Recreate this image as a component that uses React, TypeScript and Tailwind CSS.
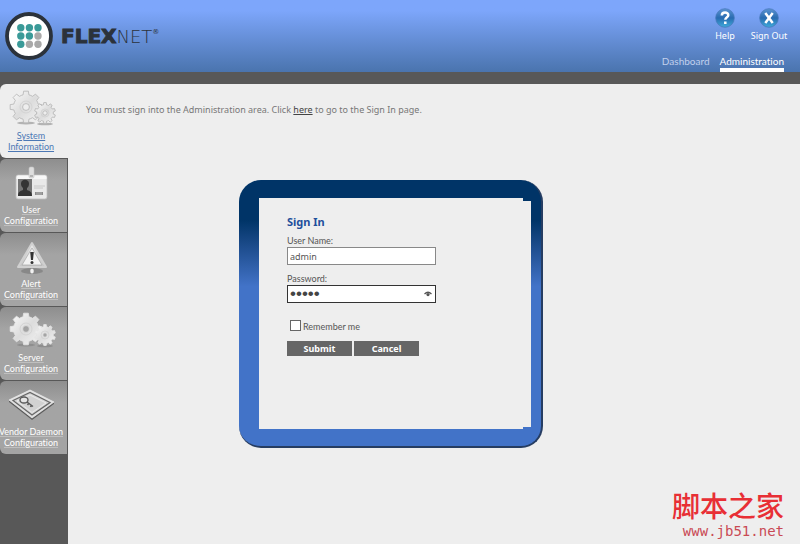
import type { ReactNode } from "react";

function gearPath(cx: number, cy: number, outer: number, inner: number, hole: number, teeth: number) {
  const step = (Math.PI * 2) / teeth;
  const at = (r: number, a: number) => `${(cx + r * Math.cos(a)).toFixed(2)} ${(cy + r * Math.sin(a)).toFixed(2)}`;
  let d = "";
  for (let i = 0; i < teeth; i++) {
    const a = i * step - Math.PI / 2;
    d += `${i ? "L" : "M"}${at(inner, a - step * 0.3)}L${at(outer, a - step * 0.19)}L${at(outer, a + step * 0.19)}L${at(inner, a + step * 0.3)}A${inner} ${inner} 0 0 1 ${at(inner, a + step * 0.7)}`;
  }
  return `${d}ZM${cx - hole} ${cy}a${hole} ${hole} 0 1 0 ${hole * 2} 0a${hole} ${hole} 0 1 0 ${-hole * 2} 0Z`;
}

function GearsIcon({ id, outline }: { id: string; outline: string }) {
  return (
    <svg width="50" height="38" viewBox="0 0 50 38" aria-hidden="true">
      <defs>
        <linearGradient id={id} x1="0" y1="0" x2="1" y2="1">
          <stop offset="0" stopColor="#fbfbfb" />
          <stop offset="0.5" stopColor="#dcdcdc" />
          <stop offset="1" stopColor="#f4f4f4" />
        </linearGradient>
      </defs>
      <ellipse cx="20" cy="33" rx="9" ry="1.5" fill="#777" opacity="0.5" />
      <ellipse cx="39" cy="34" rx="8" ry="1.3" fill="#777" opacity="0.5" />
      <path d={gearPath(20, 17, 16, 12.5, 3.4, 8)} fill={`url(#${id})`} fillRule="evenodd" stroke={outline} strokeWidth="0.8" />
      <circle cx="20" cy="17" r="6" fill="none" stroke="#cfcfcf" strokeWidth="0.8" />
      <path d={gearPath(39, 23, 10.5, 8.3, 2.2, 10)} fill={`url(#${id})`} fillRule="evenodd" stroke={outline} strokeWidth="0.8" />
      <circle cx="39" cy="23" r="4" fill="none" stroke="#cfcfcf" strokeWidth="0.7" />
    </svg>
  );
}

function BadgeIcon() {
  return (
    <svg width="50" height="38" viewBox="0 0 50 38" aria-hidden="true">
      <rect x="10" y="11" width="31" height="24" rx="2" fill="#e9e9e9" stroke="#bcbcbc" strokeWidth="0.8" />
      <path d="M10.5 13q0-1.500 1.500-1.500h27q1.500 0 1.500 1.500v2h-30z" fill="#f8f8f8" />
      <rect x="23" y="3" width="5" height="11" rx="1.500" fill="#dedede" stroke="#c4c4c4" strokeWidth="0.6" />
      <path d="M24 12h3" stroke="#888" />
      <rect x="12" y="15" width="14" height="17" fill="#747474" />
      <path d="M12 32c0-4 2-5 5-6v-2c-1.500-1-2-3-2-4.500 0-5 8-5 8 0 0 2-.5 3.500-2 4.500v2c3 1 5 2 5 6z" fill="#343434" />
      <path d="M28 22h11M28 24h9" stroke="#c8c8c8" />
      <rect x="29" y="28" width="8" height="3" fill="#8b8b8b" />
      <path d="M31 28v3M33 28v3M35 28v3" stroke="#ccc" strokeWidth="0.6" />
    </svg>
  );
}

function AlertIcon() {
  return (
    <svg width="50" height="38" viewBox="0 0 50 38" aria-hidden="true">
      <defs>
        <linearGradient id="alertFrame" x1="0" y1="0" x2="0" y2="1">
          <stop offset="0" stopColor="#ececec" />
          <stop offset="1" stopColor="#c4c4c4" />
        </linearGradient>
      </defs>
      <ellipse cx="26" cy="33" rx="11" ry="3" fill="#6b6b6b" opacity="0.5" />
      <path d="M26 5L40 29H12Z" fill="url(#alertFrame)" stroke="#d0d0d0" strokeWidth="2" strokeLinejoin="round" />
      <path d="M26 10L36 27H16Z" fill="#f2f2f2" stroke="#a6a6a6" strokeWidth="0.7" />
      <path d="M24.200 14h3.600l-.8 8h-2z" fill="#333" />
      <circle cx="26" cy="24.500" r="1.500" fill="#333" />
      <ellipse cx="26" cy="33" rx="1.800" ry="2.500" fill="#f1f1f1" />
    </svg>
  );
}

function DaemonIcon() {
  return (
    <svg width="50" height="38" viewBox="0 0 50 38" aria-hidden="true">
      <path d="M3 14v2l23 18 22-16v-2z" fill="#5d5d5d" />
      <path d="M3 14L24 4l24 12-22 16z" fill="#e0e0e0" stroke="#f0f0f0" strokeWidth="0.7" />
      <path d="M7 14.500L24 6.500l20 10-18 12.500z" fill="#d3d3d3" stroke="#676767" strokeWidth="1.300" />
      <path d="M11 15L24 9l16 8-14 9.500z" fill="#d2d2d2" stroke="#efefef" strokeWidth="0.8" />
      <ellipse cx="18" cy="14" rx="4" ry="3" fill="#e4e4e4" stroke="#5b5b5b" strokeWidth="1.400" />
      <path d="M21 16l6 4.500M23 17l-1.500 2M25.500 19l-1 2" stroke="#5b5b5b" strokeWidth="1.500" />
    </svg>
  );
}

function LogoMark() {
  const dots = ["#3a9a98", "#3a9a98", "#3a9a98", "#3a9a98", "#3a9a98", "#a9a9a9", "#3a9a98", "#a9a9a9", "#a9a9a9"];
  return (
    <svg width="48" height="48" viewBox="0 0 48 48" aria-hidden="true">
      <circle cx="24" cy="24" r="22" fill="#fff" stroke="#2b323b" strokeWidth="3.800" />
      {dots.map((fill, i) => (
        <circle key={i} cx={15.8 + (i % 3) * 8.6} cy={15.8 + Math.floor(i / 3) * 8.2} r="3.700" fill={fill} />
      ))}
    </svg>
  );
}

function RoundIcon({ id, children }: { id: string; children: ReactNode }) {
  return (
    <svg width="20" height="20" viewBox="0 0 20 20" aria-hidden="true">
      <defs>
        <linearGradient id={id} x1="0" y1="0" x2="0" y2="1">
          <stop offset="0" stopColor="#5b94d2" />
          <stop offset="0.5" stopColor="#286bb0" />
          <stop offset="1" stopColor="#3faadb" />
        </linearGradient>
      </defs>
      <circle cx="10" cy="10" r="9.300" fill={`url(#${id})`} stroke="#4778ba" strokeWidth="0.8" />
      <g fill="none" stroke="#fff" strokeWidth="2.500">{children}</g>
    </svg>
  );
}

const sections = [
  { first: "System", second: "Information", icon: <GearsIcon id="systemGears" outline="#b4b4b4" />, active: true },
  { first: "User", second: "Configuration", icon: <BadgeIcon /> },
  { first: "Alert", second: "Configuration", icon: <AlertIcon /> },
  { first: "Server", second: "Configuration", icon: <GearsIcon id="serverGears" outline="#e3e3e3" /> },
  { first: "Vendor Daemon", second: "Configuration", icon: <DaemonIcon /> },
];

function Header() {
  return (
    <header className="flex h-[84px] justify-between border-b-[12px] border-[#585858] bg-linear-to-b from-[#7da6fb] from-15% to-[#4a74ae] pr-4 pl-[5px]">
      <a href="#home" className="flex items-center gap-2 text-[#2b323b]" aria-label="FlexNet home">
        <LogoMark />
        <span className="flex items-baseline font-['DejaVu_Sans'] leading-5">
          <span className="text-[20px] font-bold [-webkit-text-stroke:1px_#2b323b]">FLEX</span>
          <span className="text-[18px] font-extralight">NET</span>
          <span className="self-start text-[7px] leading-3">®</span>
        </span>
      </a>
      <div className="flex flex-col items-end justify-between pt-2 text-white">
        <div className="-mr-[9px] flex text-[9px] leading-3">
          <button type="button" className="flex w-10 flex-col items-center gap-[2px]">
            <RoundIcon id="helpFill"><path d="M6.800 7.500C6.800 3.500 13.500 3.700 13.300 7.200c0 2-3 2-3 4.600M10.300 13.500v2.500" /></RoundIcon>
            Help
          </button>
          <button type="button" className="flex w-12 flex-col items-center gap-[2px] whitespace-nowrap">
            <RoundIcon id="signOutFill"><path d="M6.300 5L13.700 15M13.700 5L6.300 15" /></RoundIcon>
            Sign Out
          </button>
        </div>
        <nav className="flex gap-[10px] font-['Lato',sans-serif] text-[10px] leading-[13px] [font-variant-ligatures:none]">
          <a href="#dashboard" className="text-[#c2d0ec]">Dashboard</a>
          <a href="#administration" className="border-b-4 border-white">Administration</a>
        </nav>
      </div>
    </header>
  );
}

function Sidebar() {
  return (
    <nav className="w-[68px] shrink-0 overflow-hidden bg-[#585858] font-['Lato',sans-serif] text-[9px] leading-[11px] [font-variant-ligatures:none]">
      {sections.map((s) => (
        <a
          key={s.first}
          href={`#${s.first}`}
          className={
            s.active
              ? "flex h-[74px] flex-col items-center rounded-l-md bg-[#eeeeee] pt-[6px] pr-[6px] text-[#4c78b5]"
              : "flex h-[74px] flex-col items-center rounded-l-md border-t border-r border-[#585858] bg-linear-to-b from-[#8e8e8e] to-[#a4a4a4] to-30% pt-[5px] pr-[5px] text-white"
          }
        >
          {s.icon}
          <span
            className={
              s.active
                ? "mt-[2px] text-center whitespace-nowrap underline underline-offset-1"
                : "mt-[2px] text-center whitespace-nowrap underline decoration-white/30 underline-offset-1"
            }
          >
            {s.first}
            <br />
            {s.second}
          </span>
        </a>
      ))}
    </nav>
  );
}

function SignInDialog() {
  return (
    <section className="w-[304px] rounded-[22px] border-r-2 border-b-2 border-[#263d62] bg-linear-to-b from-[#003467] from-15% to-[#4273c8] to-40% pt-[18px] pr-[10px] pb-[17px] pl-5">
      <form
        className="relative flex h-[231px] flex-col bg-[#eeeeee] px-7 pt-4 font-['Lato',sans-serif] text-[9px] leading-3 text-[#555] before:absolute before:top-0 before:right-0 before:h-[3px] before:w-2 before:bg-[#003467] after:absolute after:right-0 after:bottom-0 after:h-[2px] after:w-2 after:bg-[#4273c8]"
        onSubmit={(e) => e.preventDefault()}
      >
        <h1 className="font-['Noto_Sans',sans-serif] text-[11px] leading-4 font-bold text-[#1f4f9c]">Sign In</h1>
        <label htmlFor="user" className="mt-[5px]">User Name:</label>
        <input id="user" defaultValue="admin" className="h-[18px] w-[149px] border border-[#888] bg-white px-[2px] font-['Noto_Sans',sans-serif] text-[9px] outline-none" />
        <label htmlFor="password" className="mt-2">Password:</label>
        <div className="relative w-[149px]">
          <input id="password" type="password" defaultValue="admin" className="block h-[18px] w-full border border-[#333] bg-white px-[2px] font-['Liberation_Sans',sans-serif] text-[17px] text-[#444] outline-none" />
          <button type="button" aria-label="Show password" className="absolute top-[6px] right-1">
            <svg width="8" height="6" viewBox="0 0 8 6" className="block" aria-hidden="true">
              <path d="M.5 3Q4-.5 7.500 3" fill="none" stroke="#555" strokeWidth="1.200" />
              <circle cx="4" cy="3.600" r="1.600" fill="#555" />
            </svg>
          </button>
        </div>
        <label className="mt-[17px] flex items-start gap-[2px] pl-[3px]">
          <input type="checkbox" className="size-[11px] appearance-none border border-[#666] bg-white" />
          <span className="pt-[1px]">Remember me</span>
        </label>
        <div className="mt-2 flex gap-[2px] font-['Noto_Sans',sans-serif] font-bold text-white">
          <button type="submit" className="h-[15px] w-[65px] bg-[#666]">Submit</button>
          <button type="button" className="h-[15px] w-[65px] bg-[#666]">Cancel</button>
        </div>
      </form>
    </section>
  );
}

export default function App() {
  return (
    <div className="flex min-h-screen flex-col bg-[#eeeeee] font-['Noto_Sans',sans-serif]">
      <Header />
      <div className="flex grow">
        <Sidebar />
        <main className="flex min-w-0 grow flex-col">
          <p className="pt-5 pl-[18px] text-[9px] leading-3 text-[#777]">
            You must sign into the Administration area. Click{" "}
            <a href="#signin" className="text-[#444] underline">here</a> to go to the Sign In page.
          </p>
          <div className="flex justify-center pt-16 pr-[86px]">
            <SignInDialog />
          </div>
          <div className="mt-auto flex flex-col items-end pr-4 pb-[7px] text-[#e82f35]">
            <p className="font-['Noto_Sans_CJK_SC',sans-serif] text-[28px] leading-10 font-medium" lang="zh">脚本之家</p>
            <p className="font-['DejaVu_Sans_Mono',monospace] text-[14px] leading-3 text-[#c94a55]">www.jb51.net</p>
          </div>
        </main>
      </div>
    </div>
  );
}
